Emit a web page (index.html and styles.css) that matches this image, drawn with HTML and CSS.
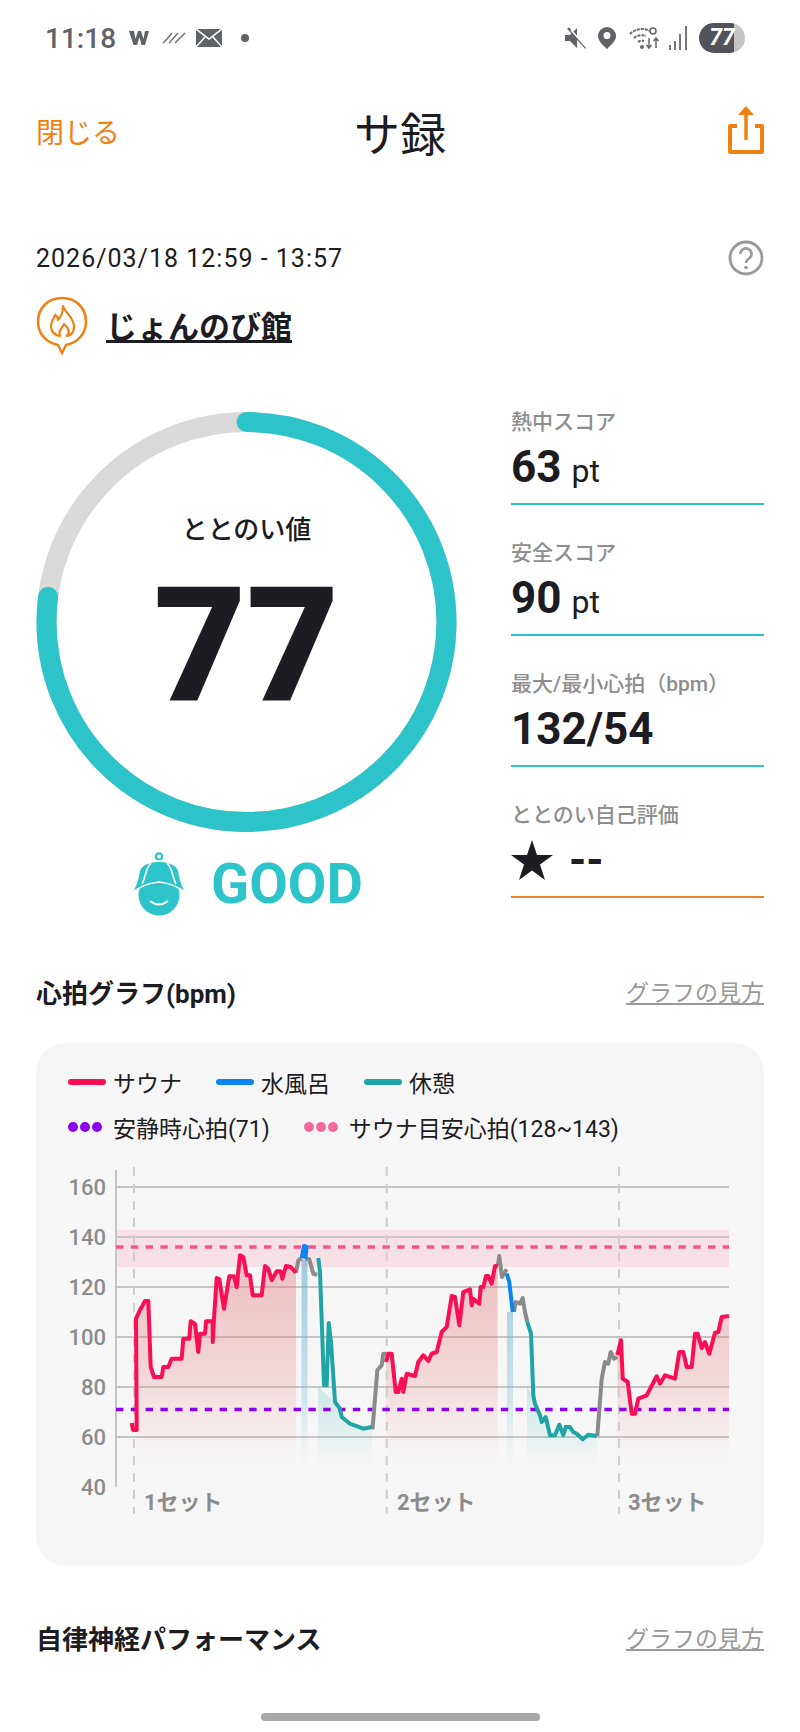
FILE: index.html
```html
<!DOCTYPE html>
<html lang="ja">
<head>
    <meta charset="UTF-8">
    <meta name="viewport" content="width=device-width, initial-scale=1.0">
    <title>サ録</title>
    <link rel="stylesheet" href="styles.css">
</head>
<body>
    <div class="status-bar">
        <div class="status-left">
            <span class="clock">11:18</span>
            <svg class="st-w" viewBox="0 0 22 16"><path d="M1 1h5l1.5 8L10 1h3l2.500 8L17 1h4l-4 14h-3.500L11.500 7 9 15H5.500z" fill="#5f6368"/></svg>
            <svg class="st-hatch" viewBox="0 0 24 12"><path d="M1 11l5-5M5 7l5-6M7 11l9-10M13 11l10-10M18 6l3-3" stroke="#777" stroke-width="1.600" fill="none"/></svg>
            <svg class="st-mail" viewBox="0 0 26 18"><rect width="26" height="18" fill="#5f6368"/><path d="M0 0l13 10L26 0M0 18l9-10M26 18l-9-10" stroke="#fff" stroke-width="1.500" fill="none"/></svg>
            <span class="st-dot"></span>
        </div>
        <div class="status-right">
            <svg class="st-mute" viewBox="0 0 24 22"><path d="M1 8h5l7-7v20l-7-7H1z" fill="#5f6368"/><path d="M4 1l18 20" stroke="#5f6368" stroke-width="2.500"/><path d="M7 3l16 18" stroke="#fff" stroke-width="1.500"/></svg>
            <svg class="st-pin" viewBox="0 0 18 22"><path d="M9 0a9 9 0 0 1 9 9c0 5-5 9-9 13C5 18 0 14 0 9a9 9 0 0 1 9-9z" fill="#5f6368"/><circle cx="9" cy="8.500" r="3.500" fill="#fff"/></svg>
            <svg class="st-wifi" viewBox="0 0 32 24"><path d="M1 8a17 17 0 0 1 20-3M5 12a12 12 0 0 1 12-2M9 16a6 6 0 0 1 6-1" stroke="#666" stroke-width="2" stroke-dasharray="3 1" fill="none"/><circle cx="13" cy="21" r="2" fill="#666"/><path d="M20 12v10M17.500 19l2.500 3 2.500-3M27 22V12M24.500 15l2.500-3 2.500 3" stroke="#666" stroke-width="1.500" fill="none"/><circle cx="24" cy="5" r="3" stroke="#666" stroke-width="1.500" fill="none"/></svg>
            <svg class="st-signal" viewBox="0 0 20 24"><path d="M2 24v-5M7 24v-9M12 24V8M18 24V0" stroke="#777" stroke-width="2"/></svg>
            <span class="st-battery">77</span>
        </div>
    </div>

    <header class="app-nav">
        <a class="nav-close">閉じる</a>
        <h1 class="nav-title">サ録</h1>
        <svg class="nav-share" viewBox="0 0 36 50"><path d="M9 20H2v26h32V20h-7" stroke="#f08010" stroke-width="4" stroke-linejoin="round" fill="none"/><path d="M18 34V6" stroke="#f08010" stroke-width="3.500"/><path d="M18 0l8 9H10z" fill="#f08010"/></svg>
    </header>

    <main class="content">
        <div class="date-row">
            <span class="date-text">2026/03/18 12:59 - 13:57</span>
            <svg class="help-icon" viewBox="0 0 36 36"><circle cx="18" cy="18" r="16" stroke="#999" stroke-width="2.800" fill="none"/><path d="M12.500 14a5.500 5.500 0 1 1 8.500 4.500c-2 1.300-3 2.300-3 4.500" stroke="#999" stroke-width="2.600" fill="none"/><circle cx="18" cy="27.500" r="1.800" fill="#999"/></svg>
        </div>
        <div class="facility-row">
            <svg class="facility-pin" viewBox="0 0 52 60"><path d="M26 2C12 2 2 12 2 26c0 12 9 21 20 23l4 8 4-8c11-2 20-11 20-23C50 12 40 2 26 2z" stroke="#f08010" stroke-width="2.500" fill="none"/><path d="M27 10c2 7 11 11 11 21 0 7-5 9-7 9 3-3 2-8-3-12-1 3-6 6-4 12-3 0-9-3-9-10 0-5 3-7 4-11 2 1 3 3 3 5 3-3 5-8 5-14z" stroke="#f08010" stroke-width="2.200" fill="none" stroke-linejoin="round"/></svg>
            <a class="facility-name">じょんのび館</a>
        </div>

        <section class="score-row">
            <div class="score-left">
                <div class="ring">
                    <svg class="ring-svg" viewBox="0 0 421 422">
                        <circle cx="210.500" cy="211" r="200" stroke="#d9d9d9" stroke-width="20" fill="none"/>
                        <circle cx="210.500" cy="211" r="200" stroke="#2cc3c9" stroke-width="20" fill="none" stroke-linecap="round" pathLength="100" stroke-dasharray="77 100" transform="rotate(-90 210.500 211)"/>
                    </svg>
                    <div class="ring-text">
                        <div class="ring-label">ととのい値</div>
                        <div class="ring-value">77</div>
                    </div>
                </div>
                <div class="rank">
                    <svg class="rank-icon" viewBox="0 0 58 64">
                        <circle cx="29" cy="43" r="20.500" fill="#2cc3c9"/>
                        <circle cx="29" cy="4.500" r="3.200" stroke="#2cc3c9" stroke-width="2.200" fill="none"/>
                        <path d="M1 41C6 35 8 28 9 20 10 13 20 9 29 9s19 4 20 11c1 8 3 15 8 21-12-8-19-10-28-11-9 1-16 3-28 11z" fill="#2cc3c9" stroke="#fff" stroke-width="1.500"/>
                        <path d="M21 11c-6 6-5 14-9 21M37 11c6 6 5 14 9 21" stroke="#fff" stroke-width="1.600" fill="none"/>
                        <path d="M20 49q9 7 18 0" stroke="#fff" stroke-width="2" fill="none"/>
                    </svg>
                    <span class="rank-text">GOOD</span>
                </div>
            </div>
            <div class="stats">
                <div class="stat">
                    <div class="stat-label">熱中スコア</div>
                    <div class="stat-value">63 <small>pt</small></div>
                </div>
                <div class="stat">
                    <div class="stat-label">安全スコア</div>
                    <div class="stat-value">90 <small>pt</small></div>
                </div>
                <div class="stat">
                    <div class="stat-label">最大/最小心拍（bpm）</div>
                    <div class="stat-value">132/54</div>
                </div>
                <div class="stat stat-self">
                    <div class="stat-label">ととのい自己評価</div>
                    <div class="stat-value">
                        <svg class="star" viewBox="0 0 42 40"><path d="M21 0l5 15h16L29 24.500 34 40 21 30.500 8 40l5-15.500L0 15h16z" fill="#1c1c22"/></svg>
                        <span>--</span>
                    </div>
                </div>
            </div>
        </section>

        <div class="section-head">
            <h2>心拍グラフ(bpm)</h2>
            <a class="guide-link">グラフの見方</a>
        </div>

        <section class="chart-card">
            <div class="legend">
                <div class="legend-row">
                    <span class="legend-item"><i class="key key-sauna"></i>サウナ</span>
                    <span class="legend-item"><i class="key key-water"></i>水風呂</span>
                    <span class="legend-item"><i class="key key-rest"></i>休憩</span>
                </div>
                <div class="legend-row">
                    <span class="legend-item"><i class="dots dots-rest"><b></b><b></b><b></b></i>安静時心拍(71)</span>
                    <span class="legend-item"><i class="dots dots-target"><b></b><b></b><b></b></i>サウナ目安心拍(128~143)</span>
                </div>
            </div>

            <!-- coordinates are page pixels: y = 1485 - (bpm - 40) * 2.5 -->
            <svg class="chart" viewBox="36 1150 728 415">
                <defs>
                    <linearGradient id="fill-red" gradientUnits="userSpaceOnUse" x1="0" y1="1250" x2="0" y2="1462">
                        <stop offset="0" stop-color="#e07070" stop-opacity=".42"/>
                        <stop offset=".55" stop-color="#e88080" stop-opacity=".28"/>
                        <stop offset="1" stop-color="#f0a0a0" stop-opacity="0"/>
                    </linearGradient>
                    <linearGradient id="fill-blue" gradientUnits="userSpaceOnUse" x1="0" y1="1260" x2="0" y2="1465">
                        <stop offset="0" stop-color="#5aa9cc" stop-opacity=".55"/>
                        <stop offset=".6" stop-color="#7cc0d8" stop-opacity=".4"/>
                        <stop offset="1" stop-color="#a0d8e4" stop-opacity="0"/>
                    </linearGradient>
                    <linearGradient id="fill-teal" gradientUnits="userSpaceOnUse" x1="0" y1="1385" x2="0" y2="1465">
                        <stop offset="0" stop-color="#5cc4c0" stop-opacity=".28"/>
                        <stop offset="1" stop-color="#5cc4c0" stop-opacity="0"/>
                    </linearGradient>
                </defs>

                <rect class="band" x="116" y="1228" width="613" height="37"/>

                <path class="grid" d="M116 1185H729M116 1235H729M116 1285H729M116 1335H729M116 1385H729M116 1435H729"/>
                <path class="axis" d="M116 1168V1485"/>

                <polygon fill="url(#fill-red)" points="136,1465 136,1317 140,1308 145,1299 148.300,1299 150.700,1365 154,1375 161.700,1375 163.300,1365 168.300,1365 171.700,1356.700 181.700,1356.700 183.300,1336.700 189.300,1336.700 190.700,1319.300 195,1321.700 198.300,1350 200,1331.700 205,1331.700 206,1319.300 212.700,1319.300 212.700,1340 214,1316.700 216.700,1276 219.300,1277.300 224,1306.700 229.300,1274.300 234,1274.300 236.700,1285 240,1253.300 243.300,1255 246.700,1273.300 250,1273.300 252.700,1293.300 261.700,1293.300 265,1264 268.300,1266.700 271.700,1278.300 276.700,1269.300 280.700,1269.300 282.300,1276.700 286,1264 290.700,1265 296,1270.700 296,1465"/>
                <polygon fill="url(#fill-red)" points="386,1465 386,1360 388.300,1351.700 391.700,1351.700 395.700,1390 398.300,1390 401.700,1376.700 403.300,1390 406.700,1371.700 415,1374 418.300,1360 423.300,1353.300 428.300,1359 431.700,1351.700 436.700,1350 441.700,1330 446.700,1325 451.700,1294 455,1295 459.300,1323.300 463.300,1290 470,1287.300 471.700,1303.300 473.300,1296.700 479.300,1301.700 480.700,1285 483.300,1285 486,1274 488.300,1274 491.700,1281.700 495,1264 497.700,1264 497.700,1465"/>
                <polygon fill="url(#fill-red)" points="617.300,1465 617.300,1353 621,1338.300 622.700,1376.700 627.700,1380 631.700,1411.700 635,1411.700 638.300,1396.700 646.700,1393.300 656.700,1374.300 660,1381.700 665,1373.300 675,1376.700 679.300,1350 683.300,1350 686.700,1365 691.700,1365 695,1331.700 697.700,1331.700 701.700,1346 705,1340 709.300,1351.700 715,1330.700 718.300,1330 721.700,1315 729,1314 729,1465"/>
                <rect fill="url(#fill-blue)" x="301.500" y="1258" width="6" height="207"/>
                <rect fill="url(#fill-blue)" x="507" y="1310" width="6" height="155"/>
                <polygon fill="url(#fill-teal)" points="318,1465 318,1385 335,1400 340,1406.700 341.700,1415 350,1421.700 363.300,1426.700 372,1425 372,1465"/>
                <polygon fill="url(#fill-teal)" points="527,1465 527,1385 533.300,1393.300 535,1401.700 540,1413.300 541.700,1420 545.700,1415 550,1433.300 555,1433.300 559.300,1422.700 563.300,1433.300 565.700,1425 570,1425 573.300,1430 576.700,1431.700 582.700,1437.300 588.300,1432.700 597,1434 597,1465"/>

                <path class="set-line" d="M134 1165V1512M386.700 1165V1512M619 1165V1512"/>
                <path class="target-line" d="M116 1245H729"/>
                <path class="rest-line" d="M116 1407.500H729"/>

                <polyline class="hr hr-idle" points="296,1270.700 298.300,1258.300 301.700,1256"/>
                <polyline class="hr hr-idle" points="305.300,1256.700 309.300,1257.300 313.300,1271.700 317.300,1272.700"/>
                <polyline class="hr hr-idle" points="372.500,1427.300 377.300,1368.300 381.700,1363.300 383.300,1351.700 386.700,1351.700"/>
                <polyline class="hr hr-idle" points="497.700,1264 499.300,1254 502,1275 506.700,1267.300"/>
                <polyline class="hr hr-idle" points="514,1310 515.700,1300 520,1301.700 522.700,1296 525,1310 527.300,1320"/>
                <polyline class="hr hr-idle" points="597.300,1434 601.700,1376.700 605,1360 608.300,1361.700 610.700,1350 614,1356.700 617.300,1355"/>

                <polyline class="hr hr-sauna" points="131.700,1421 133,1428 136.700,1428 136,1316.700 140,1308 145,1299 148.300,1299 150.700,1365 154,1375 161.700,1375 163.300,1365 168.300,1365 171.700,1356.700 181.700,1356.700 183.300,1336.700 189.300,1336.700 190.700,1319.300 195,1321.700 198.300,1350 200,1331.700 205,1331.700 206,1319.300 212.700,1319.300 212.700,1340 214,1316.700 216.700,1276 219.300,1277.300 224,1306.700 229.300,1274.300 234,1274.300 236.700,1285 240,1253.300 243.300,1255 246.700,1273.300 250,1273.300 252.700,1293.300 261.700,1293.300 265,1264 268.300,1266.700 271.700,1278.300 276.700,1269.300 280.700,1269.300 282.300,1276.700 286,1264 290.700,1265 296,1270.700"/>
                <polyline class="hr hr-sauna" points="386,1360 388.300,1351.700 391.700,1351.700 395.700,1390 398.300,1390 401.700,1376.700 403.300,1390 406.700,1371.700 415,1374 418.300,1360 423.300,1353.300 428.300,1359 431.700,1351.700 436.700,1350 441.700,1330 446.700,1325 451.700,1294 455,1295 459.300,1323.300 463.300,1290 470,1287.300 471.700,1303.300 473.300,1296.700 479.300,1301.700 480.700,1285 483.300,1285 486,1274 488.300,1274 491.700,1281.700 495,1264 497.700,1264"/>
                <polyline class="hr hr-sauna" points="617.300,1353 621,1338.300 622.700,1376.700 627.700,1380 631.700,1411.700 635,1411.700 638.300,1396.700 646.700,1393.300 656.700,1374.300 660,1381.700 665,1373.300 675,1376.700 679.300,1350 683.300,1350 686.700,1365 691.700,1365 695,1331.700 697.700,1331.700 701.700,1346 705,1340 709.300,1351.700 715,1330.700 718.300,1330 721.700,1315 729,1314"/>

                <polyline class="hr hr-water" points="301.700,1256 304,1244 306.700,1245 305.300,1256.700"/>
                <polyline class="hr hr-water" points="506.700,1271.700 509.300,1280 512.700,1310"/>

                <polyline class="hr hr-rest" points="318.300,1256 320,1270 324,1383.300 326.700,1383.300 328.700,1321 331,1340 335,1400 340,1406.700 341.700,1415 350,1421.700 363.300,1426.700 371.700,1425"/>
                <polyline class="hr hr-rest" points="527.300,1320 531,1331.700 533.300,1393.300 535,1401.700 540,1413.300 541.700,1420 545.700,1415 550,1433.300 555,1433.300 559.300,1422.700 563.300,1433.300 565.700,1425 570,1425 573.300,1430 576.700,1431.700 582.700,1437.300 588.300,1432.700 596.700,1434"/>

                <text class="y-label" x="106" y="1193">160</text>
                <text class="y-label" x="106" y="1243">140</text>
                <text class="y-label" x="106" y="1293">120</text>
                <text class="y-label" x="106" y="1343">100</text>
                <text class="y-label" x="106" y="1393">80</text>
                <text class="y-label" x="106" y="1443">60</text>
                <text class="y-label" x="106" y="1493">40</text>

                <text class="set-label" x="144" y="1508">1セット</text>
                <text class="set-label" x="397" y="1508">2セット</text>
                <text class="set-label" x="628" y="1508">3セット</text>
            </svg>
        </section>

        <div class="section-head section-next">
            <h2>自律神経パフォーマンス</h2>
            <a class="guide-link">グラフの見方</a>
        </div>
    </main>

    <div class="home-bar"></div>
</body>
</html>
```

FILE: styles.css
```css
* {
    box-sizing: border-box;
}

html, body {
    margin: 0;
    padding: 0;
}

body {
    position: relative;
    width: 800px;
    height: 1732px;
    overflow: hidden;
    background-color: #fff;
    color: #1c1c22;
    font-family: Roboto, "Noto Sans CJK JP", sans-serif;
}

/* status bar */
.status-bar {
    display: flex;
    justify-content: space-between;
    align-items: center;
    height: 76px;
    padding: 0 55px 0 45px;
}

.status-left, .status-right {
    display: flex;
    align-items: center;
}

.clock {
    width: 83px;
    font-size: 28px;
    font-weight: 500;
    color: #5f6368;
}

.st-w {
    width: 22px;
    height: 16px;
    margin-right: 12px;
}

.st-hatch {
    width: 24px;
    height: 12px;
    margin-right: 10px;
}

.st-mail {
    width: 26px;
    height: 18px;
    margin-right: 19px;
}

.st-dot {
    width: 8px;
    height: 8px;
    border-radius: 50%;
    background-color: #5f6368;
}

.st-mute {
    width: 24px;
    height: 22px;
    margin-right: 10px;
}

.st-pin {
    width: 18px;
    height: 22px;
    margin-right: 13px;
}

.st-wifi {
    width: 32px;
    height: 24px;
    margin-right: 7px;
}

.st-signal {
    width: 20px;
    height: 24px;
    margin-right: 11px;
}

.st-battery {
    width: 46px;
    height: 30px;
    border-radius: 15px;
    background: linear-gradient(to right, #50535a 77%, #c4c4c4 77%);
    color: #fff;
    font-size: 23px;
    font-weight: 700;
    font-style: italic;
    line-height: 30px;
    text-align: center;
}

/* top nav */
.app-nav {
    display: flex;
    justify-content: space-between;
    align-items: center;
    height: 110px;
    padding: 0 36px;
}

.nav-close {
    width: 120px;
    color: #f08010;
    font-size: 28px;
}

.nav-title {
    margin: 0;
    font-size: 46px;
    font-weight: 400;
}

.nav-share {
    width: 36px;
    height: 50px;
    margin-left: 84px;
}

.content {
    padding: 52px 36px 0;
}

.date-row {
    display: flex;
    justify-content: space-between;
    align-items: center;
    height: 40px;
}

.date-text {
    font-size: 25px;
    letter-spacing: 1px;
}

.help-icon {
    width: 36px;
    height: 36px;
}

.facility-row {
    display: flex;
    align-items: flex-start;
    margin-top: 18px;
}

.facility-pin {
    width: 52px;
    height: 60px;
}

.facility-name {
    margin: 12px 0 0 18px;
    font-size: 31px;
    line-height: 40px;
    font-weight: 700;
    text-decoration: underline;
}

/* score */
.score-row {
    display: flex;
    justify-content: space-between;
    margin-top: 52px;
}

.score-left {
    width: 421px;
    padding-top: 3px;
}

.ring {
    display: grid;
    width: 421px;
    height: 422px;
}

.ring-svg, .ring-text {
    grid-area: 1 / 1;
}

.ring-svg {
    width: 421px;
    height: 422px;
}

.ring-text {
    padding-top: 101px;
    text-align: center;
}

.ring-label {
    font-size: 26px;
    line-height: 36px;
    font-weight: 500;
}

.ring-value {
    margin-top: 18px;
    font-size: 160px;
    line-height: 160px;
    font-weight: 900;
}

.rank {
    display: flex;
    align-items: center;
    gap: 23px;
    margin: 19px 0 0 94px;
}

.rank-icon {
    width: 58px;
    height: 64px;
}

.rank-text {
    color: #2cc3c9;
    font-size: 56px;
    line-height: 64px;
    font-weight: 700;
}

.stats {
    display: flex;
    flex-direction: column;
    gap: 34px;
    width: 253px;
}

.stat {
    height: 97px;
    border-bottom: 2px solid #2cc3c9;
}

.stat-self {
    border-bottom-color: #e8852b;
}

.stat-label {
    color: #8e8e8e;
    font-size: 21px;
    line-height: 28px;
    font-weight: 500;
}

.stat-value {
    display: flex;
    align-items: baseline;
    gap: 10px;
    font-size: 44px;
    line-height: 62px;
    font-weight: 700;
}

.stat-value small {
    font-size: 32px;
    font-weight: 400;
}

.stat-self .stat-value {
    align-items: center;
    gap: 16px;
}

.star {
    width: 42px;
    height: 40px;
}

/* sections */
.section-head {
    display: flex;
    justify-content: space-between;
    align-items: center;
    height: 40px;
    margin-top: 55px;
}

.section-head h2 {
    margin: 0;
    font-size: 26px;
    font-weight: 700;
}

.guide-link {
    color: #999;
    font-size: 23px;
    text-decoration: underline;
}

.section-next {
    margin-top: 51px;
}

.chart-card {
    height: 523px;
    margin-top: 32px;
    border-radius: 30px;
    background-color: #f6f6f6;
    overflow: hidden;
}

.legend {
    display: flex;
    flex-direction: column;
    gap: 9px;
    padding: 21px 32px 7px;
}

.legend-row {
    display: flex;
    gap: 34px;
    height: 36px;
}

.legend-item {
    display: flex;
    align-items: center;
    gap: 7px;
    font-size: 23px;
    white-space: nowrap;
}

.key {
    width: 38px;
    height: 6px;
    border-radius: 3px;
}

.key-sauna {
    background-color: #fb0e55;
}

.key-water {
    background-color: #0a84f0;
}

.key-rest {
    background-color: #1fa5a5;
}

.dots {
    display: flex;
    gap: 2px;
    width: 38px;
    padding-right: 4px;
}

.dots b {
    width: 10px;
    height: 10px;
    border-radius: 50%;
}

.dots-rest b {
    background-color: #8a00f0;
}

.dots-target b {
    background-color: #f5699a;
}

/* chart */
.chart {
    display: block;
    width: 728px;
    height: 415px;
}

.band {
    fill: #f8e0e7;
}

.grid {
    stroke: #c6c4c4;
    stroke-width: 2;
    fill: none;
}

.axis {
    stroke: #c6c4c4;
    stroke-width: 2;
}

.set-line {
    stroke: #cfcdcd;
    stroke-width: 2;
    stroke-dasharray: 9 8;
    fill: none;
}

.target-line, .rest-line {
    stroke-width: 3.500;
    stroke-dasharray: 7.400 7.400;
    fill: none;
}

.target-line {
    stroke: #f5558c;
}

.rest-line {
    stroke: #8a00f0;
}

.hr {
    fill: none;
    stroke-width: 4;
    stroke-linejoin: round;
}

.hr-sauna {
    stroke: #fb0e55;
}

.hr-water {
    stroke: #0a84f0;
}

.hr-rest {
    stroke: #1fa5a5;
}

.hr-idle {
    stroke: #8a8a8a;
}

.y-label {
    fill: #8c8c8c;
    font-size: 22px;
    font-weight: 500;
    text-anchor: end;
}

.set-label {
    fill: #8c8c8c;
    font-size: 22px;
    font-weight: 700;
}

.home-bar {
    position: absolute;
    left: 261px;
    top: 1713px;
    width: 279px;
    height: 8px;
    border-radius: 4px;
    background-color: #a8a8a8;
}
```
